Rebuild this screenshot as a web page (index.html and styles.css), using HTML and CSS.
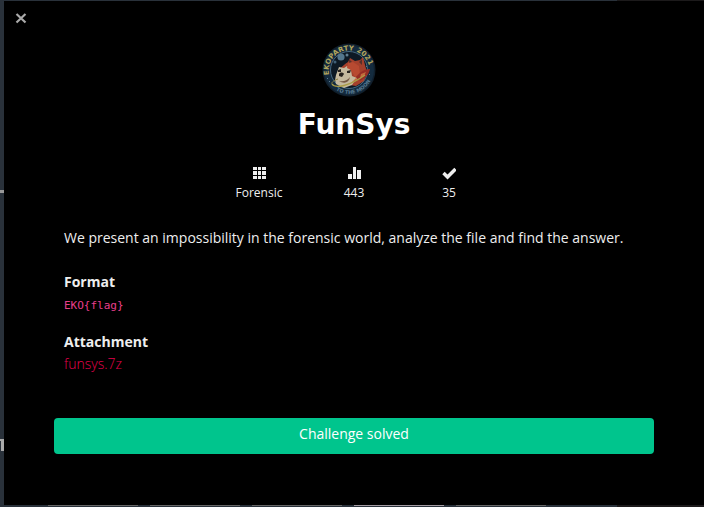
FILE: index.html
```
<!DOCTYPE html>
<html lang="en">
<head>
<meta charset="utf-8">
<meta name="viewport" content="width=device-width, initial-scale=1">
<title>FunSys</title>
<link rel="stylesheet" href="styles.css">
</head>
<body>
<div class="backdrop" aria-hidden="true">
  <i class="rule"></i>
  <i class="glyph"></i>
  <div class="tiles"><i></i><i></i><i></i><i class="light"></i><i></i></div>
</div>
<main class="dialog" role="dialog" aria-labelledby="title">
  <button class="close" type="button" aria-label="Close">
    <svg viewBox="0 0 12 12" width="12" height="12"><path d="M1.500 2l9 8.500M10.500 2l-9 8.500" stroke="#aaa" stroke-width="2.200"/></svg>
  </button>
  <header class="head">
    <svg class="logo" viewBox="0 0 54 54" role="img" aria-label="Ekoparty 2021 to the moon">
      <defs>
        <path id="arcTop" d="M7 32A20.500 20.500 0 1 1 47.500 26"/>
        <path id="arcBottom" d="M14 47A24 24 0 0 0 51 28"/>
      </defs>
      <circle cx="27" cy="27" r="26.500" fill="#101e2b"/>
      <circle cx="27" cy="27" r="25" fill="#142b3e"/>
      <circle cx="27" cy="27" r="18.500" fill="#0d1924" stroke="#45677f" stroke-width="1"/>
      <circle cx="19" cy="14" r="3.600" fill="#54768c"/>
      <circle cx="25" cy="12" r="1.500" fill="#607d91"/>
      <circle cx="13" cy="19" r="1.500" fill="#406078"/>
      <path d="M18 26c2-3 5-5 8-7l2-4 5 3 5-1 3-3 2 8 2 7-3 9-8 5-12-2z" fill="#a5402c"/>
      <path d="M27 16l3 3-3 2zM40 16l0 6-3-3z" fill="#56302a"/>
      <path d="M14 32l3-8 5 1 3-2 4 4 1 6 5 2-5 7-8 3-8-4-1-4z" fill="#c5b99e"/>
      <path d="M26 20l5-1 6 4 1 9-5 2-4-7-4-2z" fill="#b84a31"/>
      <path d="M16 27l3-1v3h-3zM25 28l4-1-1 3h-3z" fill="#28231f"/>
      <path d="M17 31c1-2 4-2 5 0l-2 3-3-1z" fill="#28231f"/>
      <path d="M17 38c4 1 8 0 11-4-1 6-6 7-11 4z" fill="#755743"/>
      <path d="M34 34c4-5 8-8 14-8-1 5-4 9-10 12z" fill="#962d25"/>
      <path d="M39 31l5-2-2 4-4 2zM34 35l-5 5 7-3z" fill="#c46a3c"/>
      <path d="M10 41c3 5 18 2 33-9" fill="none" stroke="#a99b45" stroke-width="1.400"/>
      <path d="M10 41c-1-2 3-4 6-5" fill="none" stroke="#887e3e" stroke-width="1"/>
      <path d="M5 35l1 1M7 38l1 1M44 23l1 1M47 31l1 1M18 49l1 0" stroke="#597990"/>
      <text class="logo-top"><textPath href="#arcTop">EKOPARTY 2021</textPath></text>
      <text class="logo-bottom"><textPath href="#arcBottom">TO THE MOON</textPath></text>
    </svg>
    <h1 id="title">FunSys</h1>
  </header>
  <ul class="stats">
    <li>
      <svg viewBox="0 0 14 14" width="14" height="14" fill="#eee"><path d="M1 1h4v3H1zM6 1h3v3H6zM10 1h4v3h-4zM1 5h4v4H1zM6 5h3v4H6zM10 5h4v4h-4zM1 10h4v3H1zM6 10h3v3H6zM10 10h4v3h-4z"/></svg>
      <span>Forensic</span>
    </li>
    <li>
      <svg viewBox="0 0 14 14" width="14" height="14" fill="#eee"><path d="M1 8h4v5H1zM6 1h3v12H6zM10 4h4v9h-4z"/></svg>
      <span>443</span>
    </li>
    <li>
      <svg viewBox="0 0 14 14" width="14" height="14"><path d="M1.500 7l4 4 8-8" fill="none" stroke="#eee" stroke-width="3.400"/></svg>
      <span>35</span>
    </li>
  </ul>
  <section class="details">
    <p>We present an impossibility in the forensic world, analyze the file and find the answer.</p>
    <h2>Format</h2>
    <code>EKO{flag}</code>
    <h2>Attachment</h2>
    <a href="#attachment">funsys.7z</a>
  </section>
  <button class="solved" type="button">Challenge solved</button>
</main>
</body>
</html>
```

FILE: styles.css
```
* {
  box-sizing: border-box;
}

body {
  margin: 0;
  min-height: 100vh;
  display: flex;
  padding: 1px 0 2px 4px;
  background: #29313a;
  color: #eee;
  font: 14px/20px "Open Sans", "Noto Sans", sans-serif;
}

.backdrop {
  position: absolute;
  inset: 0;
  overflow: hidden;
  background: linear-gradient(90deg, #29313a 617px, #1c1a1b 617px);
}

.rule,
.glyph {
  position: absolute;
  left: 0;
  top: 190px;
  width: 4px;
  height: 3px;
  background: #999;
}

.glyph {
  top: 439px;
  height: 12px;
  background: none;
  border: solid #aaa;
  border-width: 2px 3px 0 0;
}

.tiles {
  position: absolute;
  left: 48px;
  bottom: 1px;
  display: flex;
  gap: 12px;
}

.tiles i {
  width: 90px;
  height: 1px;
  background: #666;
}

.tiles .light {
  background: #a49ca3;
}

.dialog {
  position: relative;
  flex: 1;
  padding: 42px 50px 48px;
  background: #000;
}

.close {
  position: absolute;
  top: 11px;
  left: 11px;
  display: flex;
  padding: 0;
  border: 0;
  background: none;
}

.head {
  display: flex;
  flex-direction: column;
  align-items: center;
}

.logo {
  width: 54px;
  height: 54px;
  margin-right: 10px;
}

.logo text {
  font-family: "DejaVu Sans", sans-serif;
  font-weight: bold;
}

.logo-top {
  font-size: 7px;
  fill: #b3a65d;
}

.logo-bottom {
  font-size: 5px;
  fill: #587a91;
}

h1 {
  margin: 12px 0 0;
  color: #fff;
  font: bold 28px/32px "DejaVu Sans", sans-serif;
}

.stats {
  display: flex;
  justify-content: center;
  margin: 25px 0 0;
  padding: 0;
  list-style: none;
  font-size: 12px;
}

.stats li {
  width: 95px;
  display: flex;
  flex-direction: column;
  align-items: center;
  gap: 3px;
}

.details {
  margin-top: 25px;
  padding: 0 10px;
}

.details p {
  margin: 0;
}

h2 {
  margin: 24px 0 4px;
  font: bold 14px/20px "Open Sans", "Noto Sans", sans-serif;
}

code {
  display: block;
  color: #e83e8c;
  font: 11px/20px "DejaVu Sans Mono", monospace;
}

.details code + h2 {
  margin: 16px 0 2px;
}

.details a {
  display: block;
  color: #e6004c;
  text-decoration: none;
  font-weight: 300;
}

.solved {
  display: block;
  width: 100%;
  height: 36px;
  margin-top: 44px;
  padding: 0 0 4px;
  border: 0;
  border-radius: 4px;
  background: #00c58d;
  color: #fff;
  font: 14px/20px "Open Sans", "Noto Sans", sans-serif;
}
```
